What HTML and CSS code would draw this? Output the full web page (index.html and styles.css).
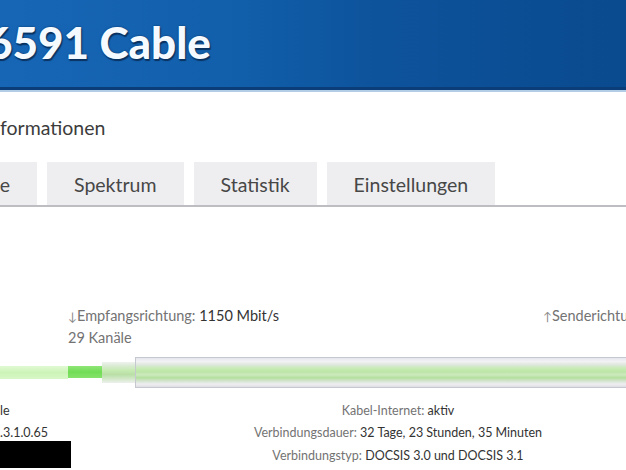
FILE: index.html
```html
<!DOCTYPE html>
<html lang="de">
<head>
<meta charset="utf-8">
<title>FRITZ!Box 6591 Cable</title>
<link rel="stylesheet" href="styles.css">
</head>
<body>
<div class="page">
  <header class="banner">
    <h1 class="title">6591 Cable</h1>
  </header>
  <h2 class="subtitle">formationen</h2>
  <nav class="tabs">
    <span class="tab">Kanäle</span>
    <span class="tab">Spektrum</span>
    <span class="tab">Statistik</span>
    <span class="tab">Einstellungen</span>
  </nav>
  <section class="info-row">
    <div class="down">
      <div><span class="label"><span class="arrow">↓</span>Empfangsrichtung: </span><span class="value">1150 Mbit/s</span></div>
      <div class="label">29 Kanäle</div>
    </div>
    <div class="up">
      <div><span class="label"><span class="arrow">↑</span>Senderichtung: </span><span class="value">50 Mbit/s</span></div>
    </div>
  </section>
  <div class="cable">
    <div class="lead"></div>
    <div class="plug"></div>
    <div class="loose"></div>
    <div class="tube"></div>
  </div>
  <section class="status">
    <div class="left">
      <div class="value">le</div>
      <div class="value">.3.1.0.65</div>
      <div class="redact"></div>
    </div>
    <div class="center">
      <div><span class="label">Kabel-Internet: </span><span class="value">aktiv</span></div>
      <div><span class="label">Verbindungsdauer: </span><span class="value">32 Tage, 23 Stunden, 35 Minuten</span></div>
      <div><span class="label">Verbindungstyp: </span><span class="value">DOCSIS 3.0 und DOCSIS 3.1</span></div>
    </div>
  </section>
</div>
</body>
</html>
```

FILE: styles.css
```css
html, body {
  margin: 0;
  padding: 0;
  background: #ffffff;
}
body {
  width: 626px;
  height: 470px;
  overflow: hidden;
  font-family: Lato, "Liberation Sans", sans-serif;
}
.page {
  width: 626px;
  overflow: hidden;
}
.banner {
  height: 87px;
  background: linear-gradient(to right, #1766b6 0%, #1260ac 35%, #0d539c 60%, #0a4a8e 100%);
  border-bottom: 3px solid #0b3e78;
  box-shadow: 0 2px 0 #b3cce8;
  overflow: hidden;
}
.title {
  margin: 0 0 0 -13px;
  padding-top: 16px;
  font-size: 44px;
  line-height: 1.2;
  font-weight: 900;
  color: #f4faff;
  white-space: nowrap;
  text-shadow: 1px 2px 1px #0a3260, 0 0 2px #0a3260;
}
.subtitle {
  margin: 26px 0 0 0;
  font-size: 19.5px;
  line-height: 1.2;
  font-weight: 400;
  color: #3c3c3c;
}
.tabs {
  display: flex;
  gap: 10px;
  margin: 23px 0 0 -75px;
  border-bottom: 2px solid #bdbdc2;
  width: 701px;
}
.tab {
  background: #eeeef1;
  padding: 11px 27px 8px;
  font-size: 19.5px;
  line-height: 1.2;
  color: #474747;
  white-space: nowrap;
}
.info-row {
  display: flex;
  margin-top: 98px;
  padding-left: 68px;
  font-size: 14.5px;
  line-height: 21px;
  white-space: nowrap;
}
.down {
  width: 475px;
  flex: none;
}
.up {
  flex: none;
}
.label {
  color: #737373;
}
.value {
  color: #333333;
}
.arrow {
  font-size: 12px;
  color: #888888;
}
.cable {
  display: flex;
  align-items: center;
  margin-top: 9px;
  height: 31px;
}
.lead {
  width: 68px;
  height: 13px;
  background: linear-gradient(to bottom, #e0f9d2, #cdf4b8 50%, #d8f7c6);
  flex: none;
}
.plug {
  width: 34px;
  height: 12px;
  background: linear-gradient(to bottom, #8fe676, #72dc56 50%, #86e26a);
  flex: none;
}
.loose {
  width: 33px;
  height: 21px;
  flex: none;
  background: linear-gradient(to bottom, #f0f2f0 0%, #d8eacf 20%, #c6ebb2 40%, #badfa6 60%, #d2e8c8 80%, #eef0ee 100%);
}
.tube {
  flex: 1;
  height: 29px;
  border: 1px solid #c6c8d0;
  border-right: none;
  background: linear-gradient(to bottom, #e6e7ec 0%, #f2f2f5 12%, #dde7da 24%, #c6ebb4 36%, #bde5a8 48%, #cdeabd 58%, #b4df9e 68%, #d6e4d1 80%, #eeeef2 90%, #dddee3 100%);
}
.status {
  display: grid;
  grid-template-columns: 170px 456px;
  margin-top: 12px;
  font-size: 12.5px;
  line-height: 22.5px;
  white-space: nowrap;
}
.left {
  text-align: left;
}
.center {
  text-align: center;
}
.redact {
  width: 71px;
  height: 27px;
  margin-top: -4px;
  background: #000000;
}
```
